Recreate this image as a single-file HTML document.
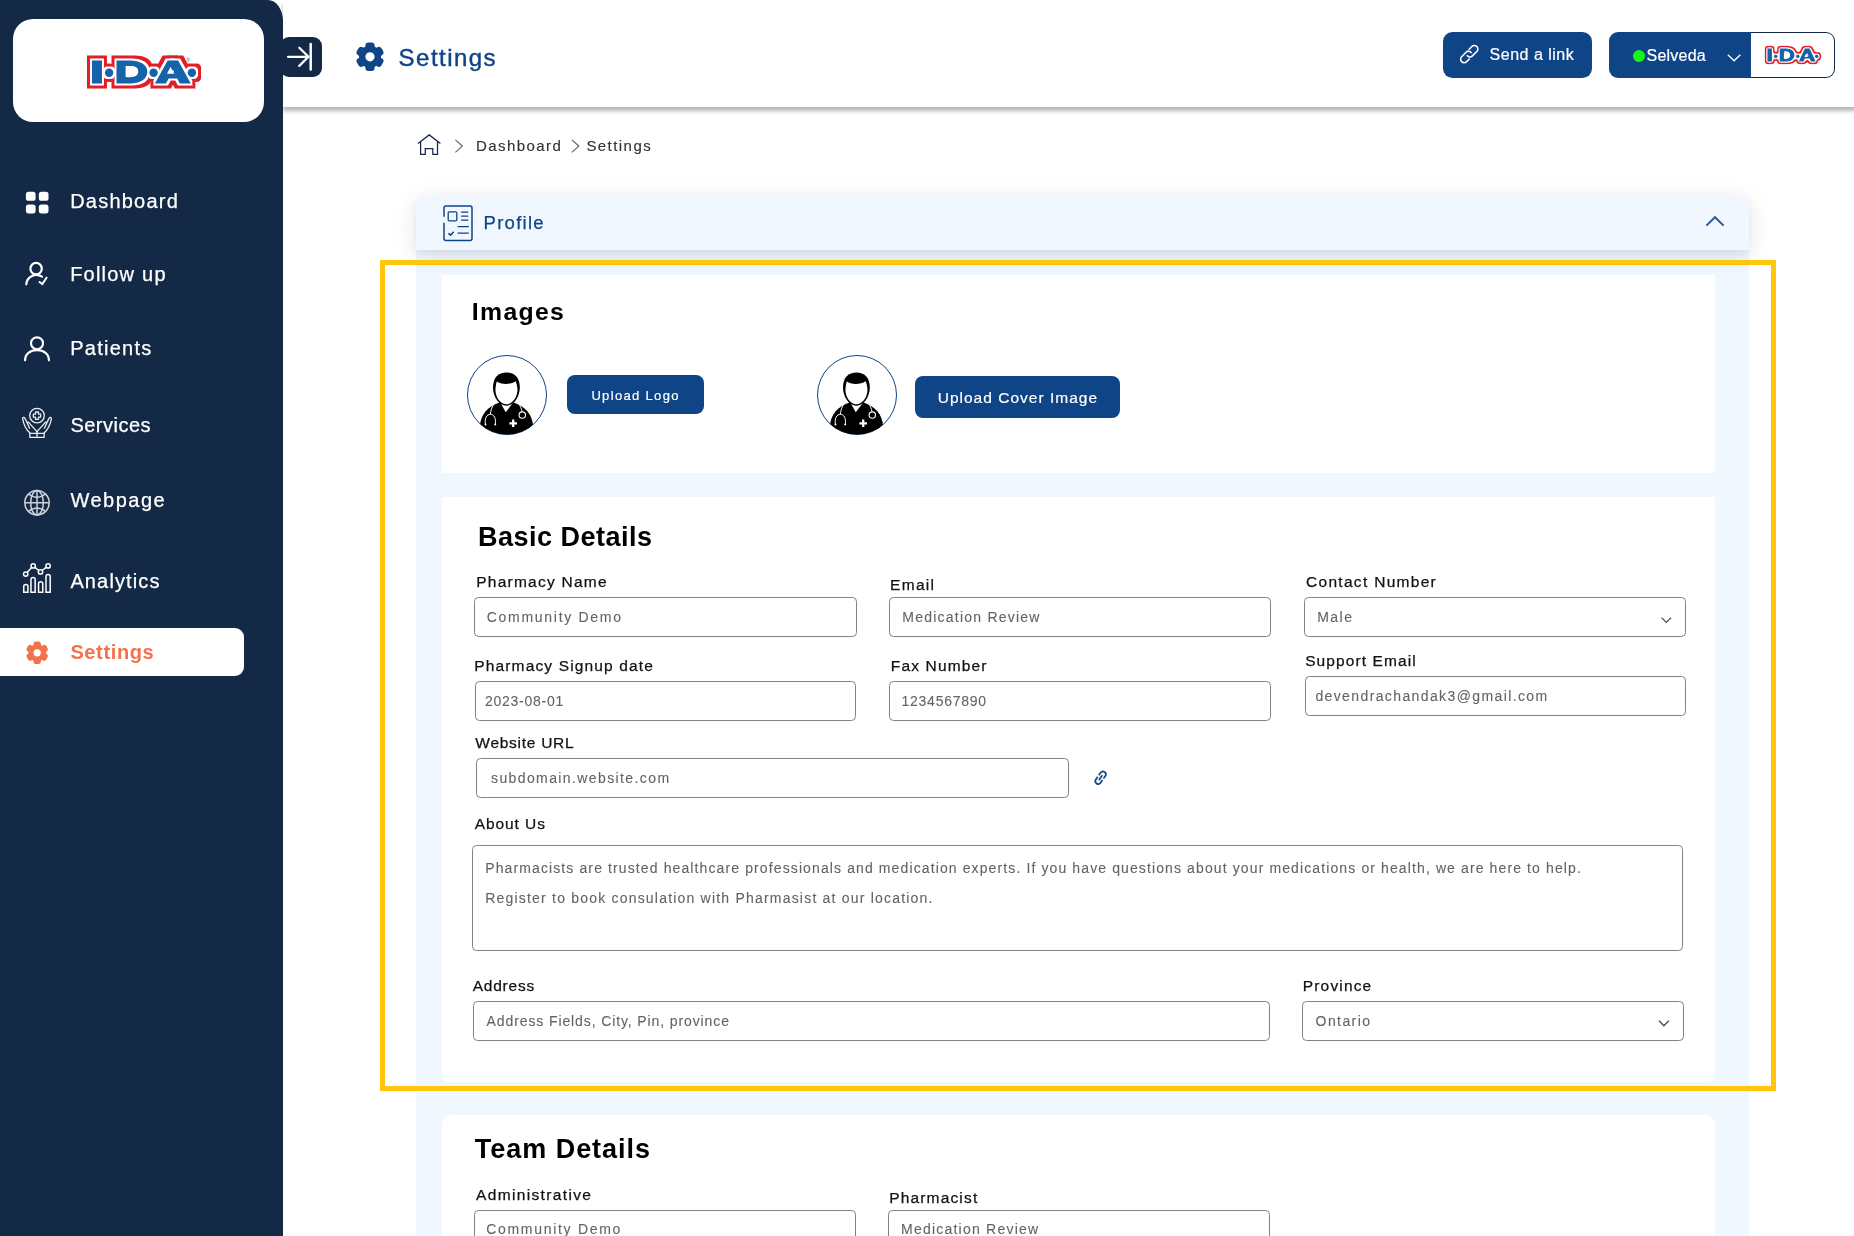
<!DOCTYPE html>
<html lang="en">
<head>
<meta charset="utf-8">
<title>Settings</title>
<style>
*{box-sizing:border-box;margin:0;padding:0}
html,body{width:1854px;height:1236px;overflow:hidden;background:#fff}
body{position:relative;font-family:"Liberation Sans",sans-serif;color:#111}
.a{position:absolute}
.t{position:absolute;white-space:nowrap;line-height:1}
.b{font-weight:bold}
/* sidebar */
#side{left:0;top:0;width:283px;height:1236px;background:#142945;border-top-right-radius:15px 21px}
#logo{left:13px;top:19px;width:251px;height:103px;background:#fff;border-radius:20px}
#pill{left:0;top:628px;width:244px;height:48px;background:#fff;border-radius:0 9px 9px 0}
.nav{color:#fff;font-size:20px;-webkit-text-stroke:.25px #fff}
/* header */
#head{left:283px;top:0;width:1671px;height:107px;background:#fff;box-shadow:0 3.5px 4px rgba(0,0,0,.29)}
#tog{left:279.5px;top:37px;width:42.5px;height:40px;background:#142945;border-radius:9px}
#send{left:1443px;top:32px;width:148.6px;height:46px;background:#0f4487;border-radius:9.5px}
#selb{left:1608.6px;top:32px;width:143.4px;height:46px;background:#0f4487;border-radius:9px 0 0 9px}
#selw{left:1751px;top:32px;width:84px;height:46px;background:#fff;border:1.5px solid #13294a;border-left:0;border-radius:0 9px 9px 0}
#dot{left:1633px;top:50px;width:12px;height:12px;border-radius:50%;background:#16f516}
/* panel */
#pbody{left:416px;top:250px;width:1333px;height:986px;background:#f1f7ff}
#phead{left:416px;top:196px;width:1333px;height:54px;background:#f1f7ff;border-radius:9px 9px 0 0;box-shadow:0 5px 26px rgba(0,0,0,.11),0 3px 6px rgba(40,60,110,.055)}
#yel{left:380px;top:260px;width:1396px;height:831px;border:5px solid #ffc60b}
.card{background:#fff}
.in{position:absolute;background:#fff;border:1.25px solid #878080;border-radius:4.5px}
.lb{font-size:15.5px;color:#111;-webkit-text-stroke:.25px #111}
.ph{font-size:14px;color:#636363;-webkit-text-stroke:.1px #636363}
.btn{position:absolute;background:#0f4487;border-radius:8px}
.av{position:absolute;width:80px;height:80px}
</style>
</head>
<body>
<!-- main panel -->
<div class="a" id="pbody"></div>
<div class="a" id="phead"></div>
<div class="a card" style="left:442px;top:275px;width:1273px;height:197.5px"></div>
<div class="a card" style="left:442px;top:497px;width:1273px;height:585px;border-radius:0 0 7px 7px"></div>
<div class="a card" style="left:442px;top:1115px;width:1273px;height:140px;border-radius:9px 9px 0 0"></div>
<div class="a" id="yel"></div>
<!-- header -->
<div class="a" id="head"></div>
<div class="a" id="side"></div>
<div class="a" id="logo"></div>
<div class="a" id="pill"></div>
<div class="a" id="tog"></div>
<div class="a" id="send"></div>
<div class="a" id="selb"></div>
<div class="a" id="selw"></div>
<div class="a" id="dot"></div>
<!-- buttons -->
<div class="btn" style="left:567px;top:375px;width:137px;height:39px"></div>
<div class="btn" style="left:915px;top:376px;width:205px;height:42px"></div>
<!-- inputs -->
<div class="in" style="left:474.2px;top:597px;width:382.4px;height:40px"></div>
<div class="in" style="left:889px;top:597px;width:382.2px;height:40px"></div>
<div class="in" style="left:1304px;top:597px;width:382px;height:40px"></div>
<div class="in" style="left:475px;top:681px;width:381.4px;height:40px"></div>
<div class="in" style="left:889px;top:681px;width:382.2px;height:40px"></div>
<div class="in" style="left:1305px;top:676px;width:381px;height:40px"></div>
<div class="in" style="left:476px;top:758px;width:593px;height:40px"></div>
<div class="in" style="left:472px;top:845px;width:1211px;height:106px"></div>
<div class="in" style="left:473px;top:1001px;width:797px;height:40px"></div>
<div class="in" style="left:1302px;top:1001px;width:382px;height:40px"></div>
<div class="in" style="left:474px;top:1209.8px;width:381.6px;height:40px"></div>
<div class="in" style="left:888.4px;top:1209.8px;width:381.4px;height:40px"></div>
<svg class="a" style="left:0;top:0;pointer-events:none" width="1854" height="1236" viewBox="0 0 1854 1236">
<defs>
<filter id="ol" x="-10%" y="-40%" width="120%" height="180%" color-interpolation-filters="sRGB">
<feMorphology in="SourceAlpha" operator="dilate" radius="5" result="d2"/><feFlood flood-color="#e21f26"/><feComposite in2="d2" operator="in" result="r"/>
<feMorphology in="SourceAlpha" operator="dilate" radius="2" result="d1"/><feFlood flood-color="#fff"/><feComposite in2="d1" operator="in" result="w"/>
<feMerge><feMergeNode in="r"/><feMergeNode in="w"/><feMergeNode in="SourceGraphic"/></feMerge></filter>
<filter id="ols" x="-10%" y="-40%" width="120%" height="180%" color-interpolation-filters="sRGB">
<feMorphology in="SourceAlpha" operator="dilate" radius="2" result="m2"/><feGaussianBlur in="m2" stdDeviation="1" result="b2"/>
<feComponentTransfer in="b2" result="t2"><feFuncA type="linear" slope="3.4" intercept="-0.588"/></feComponentTransfer>
<feFlood flood-color="#e21f26"/><feComposite in2="t2" operator="in" result="r"/>
<feMorphology in="SourceAlpha" operator="dilate" radius="1" result="m1"/><feGaussianBlur in="m1" stdDeviation="1" result="b1"/>
<feComponentTransfer in="b1" result="t1"><feFuncA type="linear" slope="3.4" intercept="-0.952"/></feComponentTransfer>
<feFlood flood-color="#fff"/><feComposite in2="t1" operator="in" result="w"/>
<feMerge><feMergeNode in="r"/><feMergeNode in="w"/><feMergeNode in="SourceGraphic"/></feMerge></filter>
<clipPath id="avc"><circle cx="40" cy="40" r="39.6"/></clipPath>
</defs>
<g filter="url(#ol)" fill="#1763a9" stroke="#1763a9" stroke-width="3.00" stroke-linejoin="miter" font-family="Liberation Sans, sans-serif" font-weight="bold" font-size="30.40">
<text transform="translate(91.28,82.00) scale(1.3555,1.0)">I</text>
<text transform="translate(115.74,82.00) scale(1.4230,1.0)">D</text>
<text transform="translate(156.88,82.00) scale(1.4490,1.0)">A</text>
<circle cx="109.10" cy="72.70" r="2.70"/>
<circle cx="153.60" cy="72.70" r="2.70"/>
<circle cx="191.90" cy="72.70" r="2.70"/>
</g>
<path fill="#fff" transform="translate(87.00 54.00) scale(1.0)" d="M38.6 12H44.5C49 12 51.2 14.3 51.2 17.45C51.2 20.6 49 22.9 44.5 22.9H38.6ZM83.5 12.7L87.3 19.8H80Z"/>
<text x="186.60" y="62.20" font-family="Liberation Sans, sans-serif" font-size="4.60" fill="#1763a9">®</text>
<g filter="url(#ols)" fill="#1763a9" stroke="#1763a9" stroke-width="0.94" stroke-linejoin="miter" font-family="Liberation Sans, sans-serif" font-weight="bold" font-size="15.05">
<text transform="translate(1766.79,60.94) scale(1.4177,1.04)">I</text>
<text transform="translate(1778.90,60.94) scale(1.4457,1.04)">D</text>
<text transform="translate(1799.27,60.94) scale(1.4712,1.04)">A</text>
<circle cx="1775.74" cy="56.36" r="1.34"/>
<circle cx="1797.77" cy="56.36" r="1.34"/>
<circle cx="1816.73" cy="56.36" r="1.34"/>
</g>
<path fill="#fff" transform="translate(1764.80 47.10) scale(0.495)" d="M38.6 12H44.5C49 12 51.2 14.3 51.2 17.45C51.2 20.6 49 22.9 44.5 22.9H38.6ZM83.5 12.7L87.3 19.8H80Z"/>
<text x="1814.10" y="51.16" font-family="Liberation Sans, sans-serif" font-size="2.28" fill="#1763a9">®</text>
<g fill="#0f4487">
<circle cx="370" cy="56.8" r="11.00"/>
<rect x="365.40" y="42.60" width="9.20" height="14.20" rx="3.00" transform="rotate(0 370 56.8)"/>
<rect x="365.40" y="42.60" width="9.20" height="14.20" rx="3.00" transform="rotate(60 370 56.8)"/>
<rect x="365.40" y="42.60" width="9.20" height="14.20" rx="3.00" transform="rotate(120 370 56.8)"/>
<rect x="365.40" y="42.60" width="9.20" height="14.20" rx="3.00" transform="rotate(180 370 56.8)"/>
<rect x="365.40" y="42.60" width="9.20" height="14.20" rx="3.00" transform="rotate(240 370 56.8)"/>
<rect x="365.40" y="42.60" width="9.20" height="14.20" rx="3.00" transform="rotate(300 370 56.8)"/>
<circle cx="370" cy="56.8" r="4.60" fill="#fff"/>
</g>
<g fill="#f4714a">
<circle cx="37.2" cy="652.8" r="8.71"/>
<rect x="33.56" y="641.55" width="7.29" height="11.25" rx="2.38" transform="rotate(0 37.2 652.8)"/>
<rect x="33.56" y="641.55" width="7.29" height="11.25" rx="2.38" transform="rotate(60 37.2 652.8)"/>
<rect x="33.56" y="641.55" width="7.29" height="11.25" rx="2.38" transform="rotate(120 37.2 652.8)"/>
<rect x="33.56" y="641.55" width="7.29" height="11.25" rx="2.38" transform="rotate(180 37.2 652.8)"/>
<rect x="33.56" y="641.55" width="7.29" height="11.25" rx="2.38" transform="rotate(240 37.2 652.8)"/>
<rect x="33.56" y="641.55" width="7.29" height="11.25" rx="2.38" transform="rotate(300 37.2 652.8)"/>
<circle cx="37.2" cy="652.8" r="3.64" fill="#fff"/>
</g>
<g fill="none" stroke="#fff" stroke-width="2.3" stroke-linecap="round" stroke-linejoin="miter"><path d="M288 56.8H308M299.3 47.8L308.4 56.8L299.3 65.9"/><path d="M310.7 44V69.6" stroke-width="2.5"/></g>
<rect x="25.9" y="191.8" width="9.7" height="9" rx="2.6" fill="#fff"/>
<rect x="25.9" y="204.4" width="9.7" height="9" rx="2.6" fill="#fff"/>
<rect x="38.8" y="191.8" width="9.7" height="9" rx="2.6" fill="#fff"/>
<rect x="38.8" y="204.4" width="9.7" height="9" rx="2.6" fill="#fff"/>
<g fill="none" stroke="#fff" stroke-width="2.2" stroke-linecap="round" stroke-linejoin="round"><circle cx="36.1" cy="268.65" r="5.7"/><path d="M26.3 284.3A10 10 0 0 1 42 276.7"/><path d="M38.9 281.5L42.3 284L47 277" stroke-width="2" stroke-linecap="butt" stroke-linejoin="miter"/></g>
<g fill="none" stroke="#fff" stroke-width="2.2" stroke-linecap="round"><circle cx="37" cy="343.3" r="6"/><path d="M25.1 360.3C25.1 354 30 350.2 37 350.2C44 350.2 48.9 354 48.9 360.3"/></g>
<g fill="none" stroke="#e9ecf1" stroke-width="1.3" stroke-linecap="round" stroke-linejoin="round">
<circle cx="37" cy="415.65" r="7.3"/>
<path d="M35.5 412H38.5V414.15H40.65V417.15H38.5V419.3H35.5V417.15H33.35V414.15H35.5Z"/>
<path d="M29.8 432.8C26 429.5 23.6 424 22.6 418.6C22.4 417.3 24.3 416.9 24.8 418.1L27.6 423.4"/>
<path d="M29.6 428.3L27.4 423.5C27 422.4 28.4 421.8 29 422.6C31 425.5 34.5 428.5 37 431.6"/>
<path d="M44.2 432.8C48 429.5 50.4 424 51.4 418.6C51.6 417.3 49.7 416.9 49.2 418.1L46.4 423.4"/>
<path d="M44.4 428.3L46.6 423.5C47 422.4 45.6 421.8 45 422.6C43 425.5 39.5 428.5 37 431.6"/>
<path d="M29.8 433.3H44.2V437.3H29.8ZM37 431.6V437.3"/>
</g>
<g fill="none" stroke="#ccd1d9" stroke-width="1.5">
<circle cx="37" cy="502.75" r="12.2"/><ellipse cx="37" cy="502.75" rx="6.3" ry="12.2"/>
<path d="M37 490.5V515M24.8 502.75H49.2M28.6 494.2Q37 500.6 45.4 494.2M28.6 511.3Q37 504.9 45.4 511.3"/></g>
<g fill="none" stroke="#fff" stroke-width="1.5">
<path d="M27.3 572.3L31.6 567.6M34.9 567.3L38.8 570.5M42.1 570.5L46.4 567.2"/>
<circle cx="25.7" cy="574.1" r="2.15"/><circle cx="33.2" cy="565.9" r="2.15"/><circle cx="40.5" cy="571.9" r="2.15"/><circle cx="48.1" cy="565.9" r="2.15"/>
<path d="M23.75 592.3V586.6A2.1 2.1 0 0 1 27.95 586.6V592.3Z"/>
<path d="M30.95 592.3V579.5A2.1 2.1 0 0 1 35.15 579.5V592.3Z"/>
<path d="M38.55 592.3V583.8A2.1 2.1 0 0 1 42.75 583.8V592.3Z"/>
<path d="M46 592.3V576.7A2.1 2.1 0 0 1 50.2 576.7V592.3Z"/>
</g>
<g transform="translate(1469.25 54.1) rotate(-45)" fill="none" stroke="#fff" stroke-width="1.6" stroke-linecap="round">
<path d="M3.4 -3.5H7.2A3.5 3.5 0 0 1 7.2 3.5H0.6A3.1 3.1 0 0 1 -2.4 -0.3"/>
<path d="M-3.4 3.5H-7.2A3.5 3.5 0 0 1 -7.2 -3.5H-0.6A3.1 3.1 0 0 1 2.4 0.3"/></g>
<path d="M1727.8 54.8L1734.1 60.8L1740.4 54.8" fill="none" stroke="#fff" stroke-width="1.4"/>
<g fill="none" stroke="#13294a" stroke-width="1.25"><path d="M418 143.4L429.2 134.9L440.4 143.4"/><path d="M420.6 141.6V154.4H425.3V148.6H432.8V154.4H437.5V141.6"/></g>
<g fill="none" stroke="#666" stroke-width="1.25"><path d="M455.4 139.9L462.3 146.1L455.4 152.4"/><path d="M571.9 139.9L578.8 146.1L571.9 152.4"/></g>
<g fill="none" stroke="#0f4487" stroke-width="1.5">
<path d="M444 216.8V208A2 2 0 0 1 446 206H470A2 2 0 0 1 472 208V238.5A2 2 0 0 1 470 240.5H446A2 2 0 0 1 444 238.5V222.8"/>
<rect x="448.2" y="211.8" width="8.6" height="9" rx="1" stroke-width="1.3"/>
<path d="M461.1 212.1H468.3M461.1 216.1H468.3M461.1 220.2H468.3M457.6 226.6H468.8M457.6 233.2H468.8" stroke-width="1.3"/>
<path d="M448.4 233.3L450.6 235.1L453.7 231.7"/></g>
<path d="M1706.4 225.6L1715 217.2L1723.6 225.6" fill="none" stroke="#2c5a9a" stroke-width="2"/>
<g fill="none" stroke="#4a4a4a" stroke-width="1.3"><path d="M1661.5 617.6L1666.3 622.4L1671.1 617.6"/><path d="M1659 1020.8L1663.9 1025.8L1668.8 1020.8"/></g>
<g transform="translate(1100.6 777.7) rotate(-55)" fill="none" stroke="#0f4487" stroke-width="1.7">
<path d="M0.9 -2.9H4.1A2.9 2.9 0 0 1 4.1 2.9H0.9"/><path d="M-0.9 2.9H-4.1A2.9 2.9 0 0 1 -4.1 -2.9H-0.9"/><path d="M-3 0H3"/></g>
<g transform="translate(467 355)">
<circle cx="40" cy="40" r="39.5" fill="#fff" stroke="#0f4487" stroke-width="1"/>
<g clip-path="url(#avc)">
<path d="M12.8 72C13.5 59 21 51.5 33 47.3L46 47.3C58 51.5 65.5 59 66.2 72L66.2 82L12.8 82Z" fill="#000"/>
<path d="M33 47L38.8 57.2L46.6 47Z" fill="#fff"/>
<path d="M26 32.5C26 22.5 31.5 17.5 39.4 17.5C47.3 17.5 52.8 22.5 52.8 32.5C52.8 42 46.6 50.7 39.4 50.7C32.2 50.7 26 42 26 32.5Z" fill="#000"/>
<path d="M28.4 34.5C28.8 31 29 28.5 29.8 26.5C33.5 29.6 43.5 30 48.6 26.3C49.6 28.5 50.2 31 50.5 34.5C50.5 42 45.5 49.3 39.4 49.3C33.3 49.3 28.4 42 28.4 34.5Z" fill="#fff"/>
<g fill="none" stroke="#fff" stroke-width="1">
<path d="M26.8 48.6C25 52 23.6 55.5 23.4 59.3"/>
<path d="M18.4 69.3C17.4 63.5 19.8 59.3 23.4 59.3C27 59.3 29.3 63.5 28.3 69.3"/>
<path d="M51.6 48.6C53.4 51 54.6 54 55 56.8"/>
<circle cx="55.3" cy="60.1" r="3.2" stroke-width="1.1"/></g>
<circle cx="18.5" cy="69.6" r="1" fill="#fff"/><circle cx="28.2" cy="69.6" r="1" fill="#fff"/>
<path d="M45.05 64.5H47.35V67.15H50V69.45H47.35V72.1H45.05V69.45H42.4V67.15H45.05Z" fill="#fff"/>
</g></g>
<g transform="translate(817 355)">
<circle cx="40" cy="40" r="39.5" fill="#fff" stroke="#0f4487" stroke-width="1"/>
<g clip-path="url(#avc)">
<path d="M12.8 72C13.5 59 21 51.5 33 47.3L46 47.3C58 51.5 65.5 59 66.2 72L66.2 82L12.8 82Z" fill="#000"/>
<path d="M33 47L38.8 57.2L46.6 47Z" fill="#fff"/>
<path d="M26 32.5C26 22.5 31.5 17.5 39.4 17.5C47.3 17.5 52.8 22.5 52.8 32.5C52.8 42 46.6 50.7 39.4 50.7C32.2 50.7 26 42 26 32.5Z" fill="#000"/>
<path d="M28.4 34.5C28.8 31 29 28.5 29.8 26.5C33.5 29.6 43.5 30 48.6 26.3C49.6 28.5 50.2 31 50.5 34.5C50.5 42 45.5 49.3 39.4 49.3C33.3 49.3 28.4 42 28.4 34.5Z" fill="#fff"/>
<g fill="none" stroke="#fff" stroke-width="1">
<path d="M26.8 48.6C25 52 23.6 55.5 23.4 59.3"/>
<path d="M18.4 69.3C17.4 63.5 19.8 59.3 23.4 59.3C27 59.3 29.3 63.5 28.3 69.3"/>
<path d="M51.6 48.6C53.4 51 54.6 54 55 56.8"/>
<circle cx="55.3" cy="60.1" r="3.2" stroke-width="1.1"/></g>
<circle cx="18.5" cy="69.6" r="1" fill="#fff"/><circle cx="28.2" cy="69.6" r="1" fill="#fff"/>
<path d="M45.05 64.5H47.35V67.15H50V69.45H47.35V72.1H45.05V69.45H42.4V67.15H45.05Z" fill="#fff"/>
</g></g>
</svg>
<div class="a" id="tx" style="left:0;top:0;width:1854px;height:1236px;will-change:transform">
<span class="t nav" style="left:70.20px;top:191.37px;font-size:20px;letter-spacing:1.223px;">Dashboard</span>
<span class="t nav" style="left:70.20px;top:264.37px;font-size:20px;letter-spacing:1.216px;">Follow up</span>
<span class="t nav" style="left:70.20px;top:338.37px;font-size:20px;letter-spacing:1.262px;">Patients</span>
<span class="t nav" style="left:70.40px;top:414.97px;font-size:20px;letter-spacing:0.487px;">Services</span>
<span class="t nav" style="left:70.40px;top:490.17px;font-size:20px;letter-spacing:1.512px;">Webpage</span>
<span class="t nav" style="left:70.40px;top:571.07px;font-size:20px;letter-spacing:1.134px;">Analytics</span>
<span class="t b" style="left:70.40px;top:642.07px;font-size:20px;letter-spacing:0.632px;color:#f4714a">Settings</span>
<span class="t " style="left:398.60px;top:45.98px;font-size:24px;letter-spacing:1.469px;color:#0f4487;-webkit-text-stroke:.45px #0f4487">Settings</span>
<span class="t " style="left:1489.60px;top:47.16px;font-size:16px;letter-spacing:0.494px;color:#fff;-webkit-text-stroke:.2px #fff">Send a link</span>
<span class="t " style="left:1646.50px;top:47.86px;font-size:16px;letter-spacing:0.230px;color:#fff;-webkit-text-stroke:.2px #fff">Selveda</span>
<span class="t " style="left:476.00px;top:138.40px;font-size:15px;letter-spacing:1.433px;color:#333;-webkit-text-stroke:.15px #333">Dashboard</span>
<span class="t " style="left:586.40px;top:138.40px;font-size:15px;letter-spacing:1.443px;color:#333;-webkit-text-stroke:.15px #333">Settings</span>
<span class="t " style="left:483.60px;top:213.74px;font-size:18.5px;letter-spacing:1.259px;color:#0f4487;-webkit-text-stroke:.25px #0f4487">Profile</span>
<span class="t b" style="left:471.80px;top:299.61px;font-size:24.8px;letter-spacing:1.327px;color:#000">Images</span>
<span class="t b" style="left:478.10px;top:524.24px;font-size:27px;letter-spacing:0.485px;color:#000">Basic Details</span>
<span class="t b" style="left:474.80px;top:1136.24px;font-size:27px;letter-spacing:0.968px;color:#000">Team Details</span>
<span class="t " style="left:591.40px;top:388.90px;font-size:13px;letter-spacing:1.330px;color:#fff;-webkit-text-stroke:.2px #fff">Upload Logo</span>
<span class="t " style="left:937.70px;top:389.88px;font-size:15.5px;letter-spacing:1.010px;color:#fff;-webkit-text-stroke:.2px #fff">Upload Cover Image</span>
<span class="t lb" style="left:476.20px;top:573.88px;font-size:15.5px;letter-spacing:1.250px;">Pharmacy Name</span>
<span class="t lb" style="left:890.10px;top:576.88px;font-size:15.5px;letter-spacing:1.272px;">Email</span>
<span class="t lb" style="left:1306.00px;top:574.38px;font-size:15.5px;letter-spacing:1.301px;">Contact Number</span>
<span class="t lb" style="left:474.30px;top:658.08px;font-size:15.5px;letter-spacing:1.142px;">Pharmacy Signup date</span>
<span class="t lb" style="left:890.80px;top:658.08px;font-size:15.5px;letter-spacing:1.154px;">Fax Number</span>
<span class="t lb" style="left:1305.20px;top:653.38px;font-size:15.5px;letter-spacing:1.091px;">Support Email</span>
<span class="t lb" style="left:475.30px;top:735.48px;font-size:15.5px;letter-spacing:0.730px;">Website URL</span>
<span class="t lb" style="left:474.70px;top:816.18px;font-size:15.5px;letter-spacing:0.928px;">About Us</span>
<span class="t lb" style="left:472.70px;top:978.48px;font-size:15.5px;letter-spacing:0.781px;">Address</span>
<span class="t lb" style="left:1302.80px;top:978.28px;font-size:15.5px;letter-spacing:1.159px;">Province</span>
<span class="t lb" style="left:476.00px;top:1187.18px;font-size:15.5px;letter-spacing:1.353px;">Administrative</span>
<span class="t lb" style="left:889.20px;top:1189.88px;font-size:15.5px;letter-spacing:1.165px;">Pharmacist</span>
<span class="t ph" style="left:486.80px;top:610.15px;font-size:14px;letter-spacing:1.705px;">Community Demo</span>
<span class="t ph" style="left:902.30px;top:610.15px;font-size:14px;letter-spacing:1.226px;">Medication Review</span>
<span class="t ph" style="left:1317.20px;top:610.15px;font-size:14px;letter-spacing:1.480px;">Male</span>
<span class="t ph" style="left:485.00px;top:694.15px;font-size:14px;letter-spacing:0.741px;">2023-08-01</span>
<span class="t ph" style="left:901.50px;top:694.15px;font-size:14px;letter-spacing:0.747px;">1234567890</span>
<span class="t ph" style="left:1315.40px;top:689.15px;font-size:14px;letter-spacing:1.386px;">devendrachandak3@gmail.com</span>
<span class="t ph" style="left:491.00px;top:771.15px;font-size:14px;letter-spacing:1.394px;">subdomain.website.com</span>
<span class="t ph" style="left:485.20px;top:861.15px;font-size:14px;letter-spacing:1.114px;">Pharmacists are trusted healthcare professionals and medication experts. If you have questions about your medications or health, we are here to help.</span>
<span class="t ph" style="left:485.20px;top:891.15px;font-size:14px;letter-spacing:1.203px;">Register to book consulation with Pharmasist at our location.</span>
<span class="t ph" style="left:486.60px;top:1014.15px;font-size:14px;letter-spacing:0.889px;">Address Fields, City, Pin, province</span>
<span class="t ph" style="left:1315.60px;top:1014.15px;font-size:14px;letter-spacing:1.413px;">Ontario</span>
<span class="t ph" style="left:486.20px;top:1222.15px;font-size:14px;letter-spacing:1.705px;">Community Demo</span>
<span class="t ph" style="left:901.00px;top:1222.15px;font-size:14px;letter-spacing:1.226px;">Medication Review</span>
</div>
</body>
</html>
